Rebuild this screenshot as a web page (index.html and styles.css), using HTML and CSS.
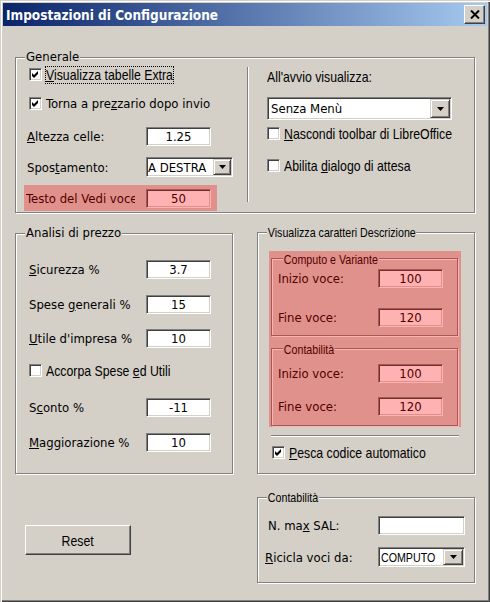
FILE: index.html
```html
<!DOCTYPE html>
<html lang="it">
<head>
<meta charset="utf-8">
<title>Impostazioni di Configurazione</title>
<link rel="stylesheet" href="styles.css">
</head>
<body>
<div class="window">
  <header class="titlebar">
    <span class="title">Impostazioni di Configurazione</span>
    <span class="closebtn"><svg width="10" height="9" viewBox="0 0 10 9"><path d="M1 0.5 L9 8.5 M9 0.5 L1 8.5" stroke="#000" stroke-width="2" fill="none"/></svg></span>
  </header>
  <main class="client">
    <section class="group general">
      <span class="legend">Generale</span>
      <div class="gen-left">
        <div class="row g1"><span class="cb"><svg viewBox="0 0 11 11"><path d="M2 4 L4 6 L8 2 L8 5 L4 9 L2 7 Z"/></svg></span><span class="focus"><span class="nw"><u>V</u>isualizza tabelle Extra</span></span></div>
        <div class="row g2"><span class="cb"><svg viewBox="0 0 11 11"><path d="M2 4 L4 6 L8 2 L8 5 L4 9 L2 7 Z"/></svg></span><span class="cblab">Torna a pre<u>z</u>zario dopo invio</span></div>
        <div class="row g3"><span class="lab"><u>A</u>ltezza celle:</span><span class="inp">1.25</span></div>
        <div class="row g4"><span class="lab">Spos<u>t</u>amento:</span><span class="sel s-dest"><span class="sel-val">A DESTRA</span><span class="dd"><svg width="7" height="4" viewBox="0 0 7 4"><path d="M0 0 H7 L3.5 4 Z"/></svg></span></span></div>
        <div class="row g5 hl"><span class="lab clip">Testo del Vedi voce</span><span class="inp">50</span></div>
      </div>
      <div class="vsep"></div>
      <div class="gen-right">
        <div class="ar1"><span class="nw">All'avvio visualizza:</span></div>
        <div class="sel s-menu"><span class="sel-val">Senza Menù</span><span class="dd"><svg width="7" height="4" viewBox="0 0 7 4"><path d="M0 0 H7 L3.5 4 Z"/></svg></span></div>
        <div class="row ar3"><span class="cb"></span><span class="nw cbl"><u>N</u>ascondi toolbar di LibreOffice</span></div>
        <div class="row ar4"><span class="cb"></span><span class="nw cbl">Abilita <u>d</u>ialogo di attesa</span></div>
      </div>
    </section>

    <section class="group analisi">
      <span class="legend">Analisi di prezzo</span>
      <div class="row arow"><span class="lab"><u>S</u>icurezza %</span><span class="inp">3.7</span></div>
      <div class="row arow"><span class="lab">Spese <u>g</u>enerali %</span><span class="inp">15</span></div>
      <div class="row arow"><span class="lab"><u>U</u>tile d'impresa %</span><span class="inp">10</span></div>
      <div class="row arow cbrow"><span class="cb"></span><span class="nw cbl">Accorpa Spese <u>e</u>d Utili</span></div>
      <div class="row arow"><span class="lab">S<u>c</u>onto %</span><span class="inp">-11</span></div>
      <div class="row arow"><span class="lab"><u>M</u>aggiorazione %</span><span class="inp">10</span></div>
    </section>

    <section class="group visual">
      <span class="legend nw lg-n">Visualizza caratteri Descrizione</span>
      <div class="hl hl-area">
        <div class="group sub sub1">
          <span class="legend nw lg-s">Computo e Variante</span>
          <div class="row vrow"><span class="lab vlab">Inizio voce:</span><span class="inp">100</span></div>
          <div class="row vrow"><span class="lab vlab">Fine voce:</span><span class="inp">120</span></div>
        </div>
        <div class="group sub sub2">
          <span class="legend nw lg-s">Contabilità</span>
          <div class="row vrow"><span class="lab vlab">Inizio voce:</span><span class="inp">100</span></div>
          <div class="row vrow"><span class="lab vlab">Fine voce:</span><span class="inp">120</span></div>
        </div>
      </div>
      <div class="hsep"></div>
      <div class="row pesca"><span class="cb"><svg viewBox="0 0 11 11"><path d="M2 4 L4 6 L8 2 L8 5 L4 9 L2 7 Z"/></svg></span><span class="nw cbl"><u>P</u>esca codice automatico</span></div>
    </section>

    <div class="reset-cell">
      <div class="btn"><span class="nw nw-c">Reset</span></div>
    </div>

    <section class="group conta">
      <span class="legend nw lg-n">Contabilità</span>
      <div class="row crow"><span class="lab clab">N. ma<u>x</u> SAL:</span><span class="inp w87"></span></div>
      <div class="row crow"><span class="lab clab2"><u>R</u>icicla voci da:</span><span class="sel s-comp"><span class="sel-val"><span class="nw nw13">COMPUTO</span></span><span class="dd"><svg width="7" height="4" viewBox="0 0 7 4"><path d="M0 0 H7 L3.5 4 Z"/></svg></span></span></div>
    </section>
  </main>
</div>
</body>
</html>
```
FILE: styles.css
```css
* { box-sizing: border-box; }
html, body { margin: 0; padding: 0; }
body {
  background: #d4d0c8;
  font-family: "DejaVu Sans Condensed", "DejaVu Sans", sans-serif;
  font-size: 13px;
  color: #000;
}
u { text-decoration: underline; text-underline-offset: 1px; }

.window {
  width: 490px;
  height: 602px;
  padding: 3px;
  background: #d4d0c8;
  overflow: hidden;
  box-shadow: inset 1px 1px 0 #d4d0c8, inset 2px 2px 0 #fff,
              inset -1px -1px 0 #404040, inset -2px -2px 0 #808080;
}

.titlebar {
  height: 23px;
  display: flex;
  align-items: center;
  justify-content: space-between;
  padding: 0 2px 0 3px;
  background: linear-gradient(to right, #0a246a, #a6caf0);
}
.title {
  color: #fff;
  font-weight: bold;
  font-size: 13.5px;
  white-space: nowrap;
}
.closebtn {
  width: 21px;
  height: 19px;
  display: flex;
  align-items: center;
  justify-content: center;
  background: #d4d0c8;
  border: 1px solid;
  border-color: #fff #404040 #404040 #fff;
  box-shadow: inset -1px -1px 0 #808080;
}
.closebtn svg { display: block; }

.client {
  display: grid;
  grid-template-columns: 218px 218px;
  column-gap: 24px;
  align-items: start;
  padding: 31px 12px 0 12px;
}

/* narrow (Arial Narrow-like) text */
.nw {
  display: inline-block;
  font-family: "Liberation Sans", Arial, sans-serif;
  font-size: 15px;
  white-space: nowrap;
  transform: scaleX(0.82);
  transform-origin: 0 50%;
}
.nw13 { font-size: 13px; }
.nw-c { transform-origin: 50% 50%; }

/* group boxes */
.group {
  position: relative;
  border: 1px solid #808080;
  box-shadow: inset 1px 1px 0 #fff, 1px 1px 0 #fff;
}
.legend {
  position: absolute;
  left: 9px;
  top: -9px;
  padding: 0 1px;
  background: #d4d0c8;
  line-height: 15px;
  white-space: nowrap;
}
.legend.lg-n { font-size: 13px; top: -8px; }
.legend.lg-s { font-size: 13px; top: -7px; left: 11px; }

.row { display: flex; align-items: center; }
.lab { flex: none; white-space: nowrap; }

/* controls */
.cb {
  width: 13px;
  height: 13px;
  flex: none;
  background: #fff;
  border: 1px solid;
  border-color: #808080 #fff #fff #808080;
  box-shadow: inset 1px 1px 0 #404040, inset -1px -1px 0 #d4d0c8;
}
.cb svg { display: block; width: 11px; height: 11px; }
.cb svg path { fill: #000; }
.cbl { margin-left: 4px; }
.cblab { margin-left: 4px; white-space: nowrap; }
.focus {
  margin-left: 3px;
  width: 129px;
  height: 18px;
  border: 1px dotted #000;
  line-height: 16px;
  white-space: nowrap;
}
.focus .nw { line-height: 16px; }

.inp {
  width: 65px;
  height: 19px;
  flex: none;
  background: #fff;
  border: 1px solid;
  border-color: #808080 #fff #fff #808080;
  box-shadow: inset 1px 1px 0 #404040, inset -1px -1px 0 #d4d0c8;
  text-align: center;
  padding-top: 1px;
  line-height: 16px;
}
.inp.w87 { width: 87px; }

.sel {
  display: flex;
  flex: none;
  padding: 1px;
  background: #fff;
  border: 1px solid;
  border-color: #808080 #fff #fff #808080;
  box-shadow: inset 1px 1px 0 #404040, inset -1px -1px 0 #d4d0c8;
}
.sel-val {
  flex: 1;
  min-width: 0;
  overflow: hidden;
  white-space: nowrap;
  align-self: center;
}
.dd {
  flex: none;
  display: flex;
  align-items: center;
  justify-content: center;
  background: #d4d0c8;
  border: 1px solid;
  border-color: #d4d0c8 #404040 #404040 #d4d0c8;
  box-shadow: inset 1px 1px 0 #fff, inset -1px -1px 0 #808080;
}
.dd svg { display: block; }
.dd svg path { fill: #000; }

.s-dest { width: 87px; height: 20px; }
.s-dest .dd { width: 18px; }
.s-menu { width: 185px; height: 23px; margin-top: 10px; }
.s-menu .sel-val { padding-left: 2px; }
.s-menu .dd { width: 20px; }
.s-comp { width: 87px; height: 20px; }
.s-comp .sel-val { padding-left: 1px; }
.s-comp .dd { width: 20px; }

/* highlight overlay */
.hl { position: relative; }
.hl::after {
  content: "";
  position: absolute;
  inset: 0;
  background: rgba(255, 0, 0, 0.3);
  pointer-events: none;
}

/* Generale */
.general {
  grid-column: 1 / -1;
  height: 156px;
  display: flex;
  align-items: flex-start;
}
.gen-left { width: 231px; flex: none; padding: 4px 0 0 11px; }
.g1 { height: 25px; padding-left: 2px; }
.g2 { height: 33px; padding-left: 2px; }
.g3 { height: 33px; }
.g4 { height: 28px; }
.g3 .lab, .g4 .lab { width: 119px; }
.g5 { height: 26px; margin-top: 4px; margin-left: -3px; width: 193px; padding-left: 2px; }
.g5 .lab { width: 109px; overflow: hidden; margin-right: 11px; }
.vsep {
  flex: none;
  width: 2px;
  height: 135px;
  margin-top: 9px;
  border-left: 1px solid #808080;
  border-right: 1px solid #fff;
}
.gen-right { padding: 9px 0 0 18px; }
.ar1 { height: 20px; line-height: 20px; white-space: nowrap; }
.ar1 .nw { line-height: 20px; }
.ar3 { height: 18px; margin-top: 4px; }
.ar4 { height: 18px; margin-top: 14px; }

/* Analisi */
.analisi {
  margin-top: 20px;
  height: 241px;
  padding: 26px 0 0 13px;
  display: flex;
  flex-direction: column;
  gap: 15.6px;
}
.arow { height: 19px; }
.arow .lab { width: 117px; }
.cbrow { margin-top: -3px; margin-bottom: 3px; }

/* Visualizza */
.visual {
  margin-top: 19px;
  height: 242px;
  padding: 18px 0 0 11px;
}
.hl-area { width: 192px; padding: 7px 3px 1px 2px; }
.sub {
  width: 187px;
  height: 78px;
  display: flex;
  flex-direction: column;
  padding-left: 6px;
}
.sub1 { padding-top: 10px; gap: 20px; }
.sub2 { margin-top: 12px; padding-top: 15px; gap: 14px; }
.vrow { height: 19px; }
.vlab { width: 100px; }
.hsep {
  width: 188px;
  height: 2px;
  margin: 8px 0 0 2px;
  border-top: 1px solid #808080;
  border-bottom: 1px solid #fff;
}
.pesca { height: 13px; margin: 9px 0 0 3px; }

/* Reset */
.reset-cell { padding: 51px 0 0 10px; }
.btn {
  width: 106px;
  height: 30px;
  display: flex;
  align-items: center;
  justify-content: center;
  background: #d4d0c8;
  border: 1px solid;
  border-color: #fff #404040 #404040 #fff;
  box-shadow: inset -1px -1px 0 #808080;
}

/* Contabilità */
.conta {
  margin-top: 23px;
  height: 86px;
  padding: 18px 0 0 10px;
  display: flex;
  flex-direction: column;
  gap: 12px;
}
.crow { height: 19px; }
.crow:last-child { height: 20px; }
.clab { width: 110px; }
.clab2 { width: 113px; margin-left: -3px; }
```
